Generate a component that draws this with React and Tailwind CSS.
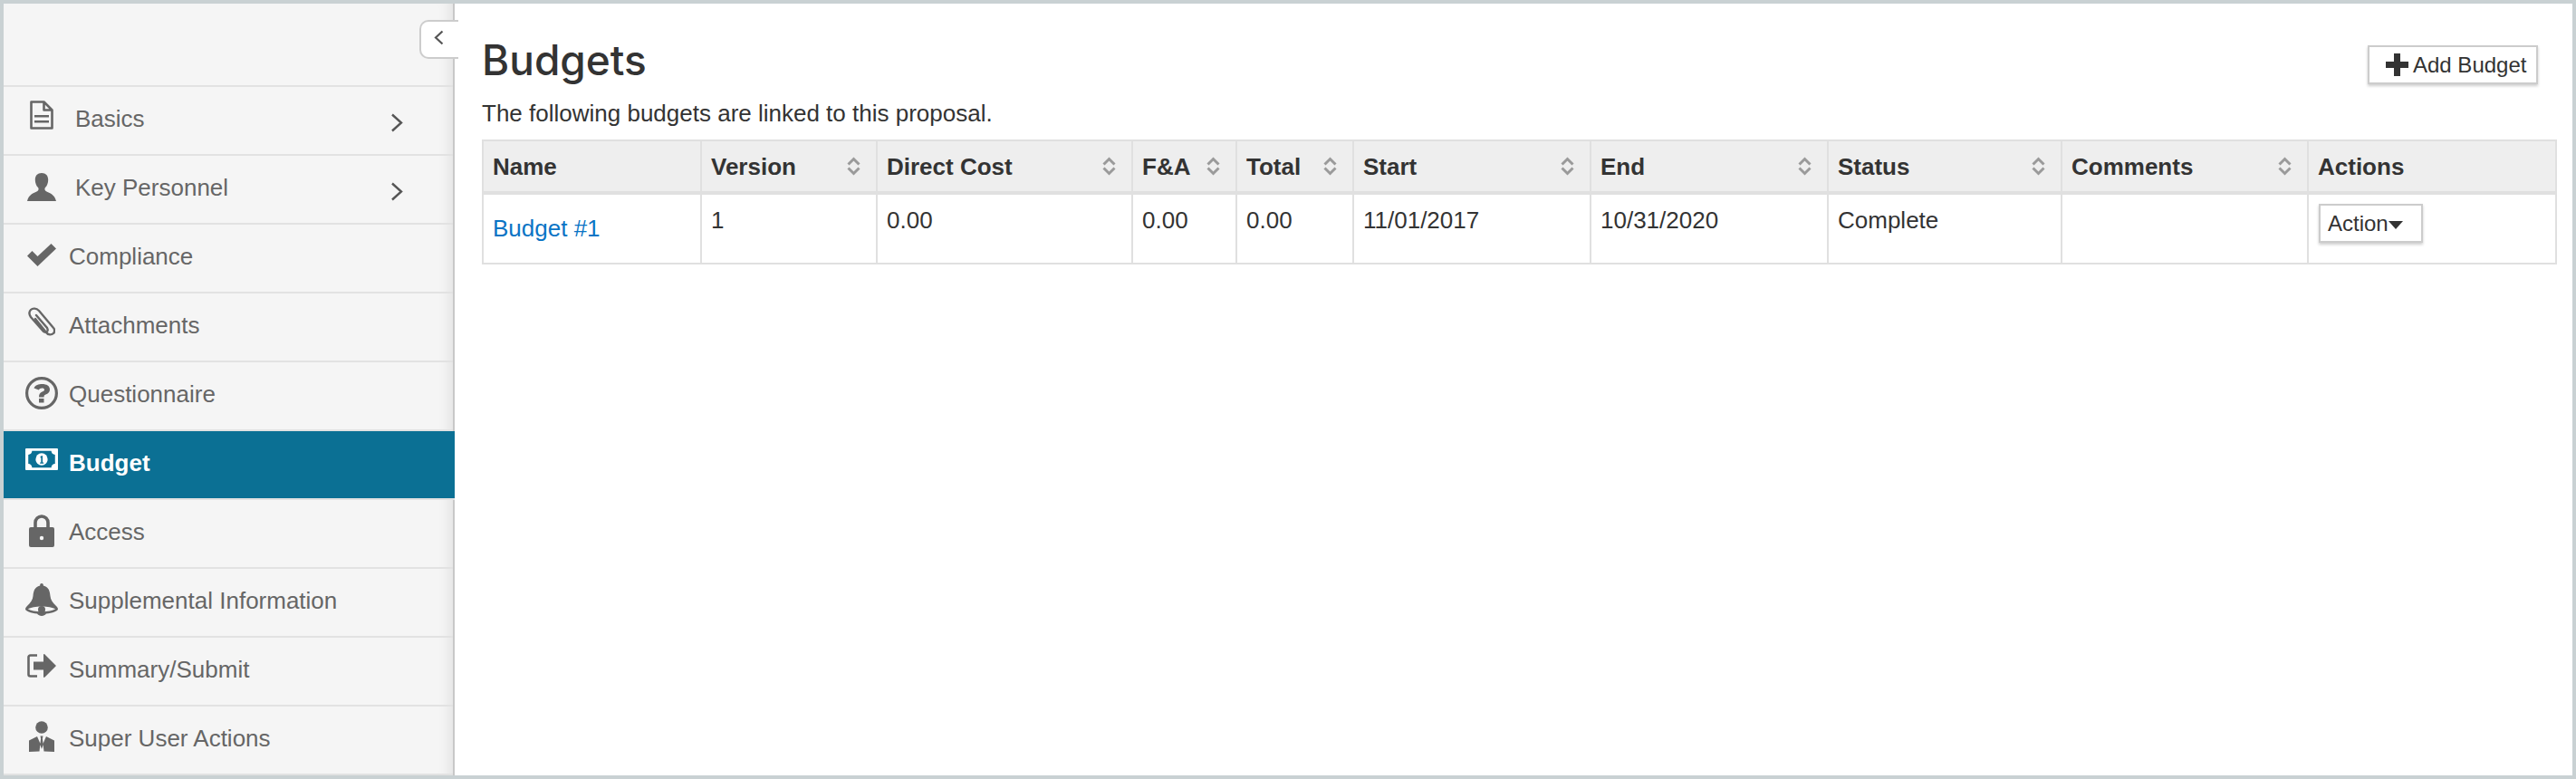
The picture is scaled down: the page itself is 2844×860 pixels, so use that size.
const FileIcon = () => (
    <svg width="28" height="32" viewBox="0 0 28 32" className="text-[#666]">
        <path d="M2.500 1.500h14l9 9v20h-23z M16.500 1.500v9h9" fill="none" stroke="currentColor" strokeWidth="2.600" strokeLinejoin="round" />
        <path d="M6 16h16v2.600H6z M6 22h16v2.600H6z" fill="currentColor" />
    </svg>
);

const UserIcon = () => (
    <svg width="32" height="31" viewBox="0 0 32 31" fill="currentColor">
        <path d="M16 0c-4.600 0-7.200 3-7.200 7.400 0 3.400 1.200 6.600 3.200 8.600 1 1 .8 3-.6 4C8 21.800 1.600 23.500 0 31h32c-1.600-7.500-8-9.200-11.400-11-1.400-1-1.600-3-.6-4 2-2 3.200-5.200 3.200-8.600C23.200 3 20.600 0 16 0z" />
    </svg>
);

const CheckIcon = () => (
    <svg width="32" height="25" viewBox="0 0 32 25" fill="currentColor">
        <path d="M0 13.500l5.500-5.500 6 6L26.500 0 32 5.500 11.500 25z" />
    </svg>
);

const ClipIcon = () => (
    <svg width="30" height="32" viewBox="0 0 30 32" fill="none" stroke="currentColor" strokeWidth="2.400" strokeLinecap="round">
        <path d="M8 13 L20 28 C22 31 26 31 28 29 C30 27 29 24 28 23 L12 4 C9 1 5 1 3 3 C1 5 1 8 3 11 L17 27 C18 28 20 28 21 27 C22 26 22 25 21 23 L9 9" />
    </svg>
);

const QuestionIcon = () => (
    <svg width="36" height="36" viewBox="0 0 36 36">
        <circle cx="18" cy="18" r="16.400" fill="none" stroke="currentColor" strokeWidth="3.200" />
        <path d="M9.500 12.500C11 9 14.500 8 18.500 8c5 0 8.500 2 8.500 6 0 3-2 4.500-4.500 5.500-1.500.7-2 1.300-2 3h-5.500c0-3.500 1-4.800 3.500-6 1.800-.8 2.500-1.300 2.500-2.300 0-1-1.200-1.700-2.500-1.700-2 0-3 .7-3.700 2z" fill="currentColor" />
        <rect x="15" y="24" width="5.500" height="4.500" fill="currentColor" />
    </svg>
);

const BillIcon = () => (
    <svg width="39" height="26" viewBox="0 0 39 26">
        <path fillRule="evenodd" clipRule="evenodd" fill="currentColor" d="M0 1A1 1 0 0 1 1 0h37a1 1 0 0 1 1 1v24a1 1 0 0 1-1 1H1a1 1 0 0 1-1-1zM8 3c0 2.500-2 4.500-4.500 4.500v11C6 18.500 8 20.500 8 23h23c0-2.500 2-4.500 4.500-4.500v-11C33 7.500 31 5.500 31 3z" />
        <circle cx="19.500" cy="13" r="7.200" fill="currentColor" />
        <path d="M18 9.500l2.600-.8v8.100h1.300v1.400h-4.400v-1.400h1.300v-5.700l-.8.200z" fill="#0b7094" />
    </svg>
);

const LockIcon = () => (
    <svg width="28" height="36" viewBox="0 0 28 36">
        <path d="M7 16V9a7 7 0 0 1 14 0v7" fill="none" stroke="currentColor" strokeWidth="3.600" />
        <rect x="0" y="14" width="28" height="22" rx="2" fill="currentColor" />
        <circle cx="14" cy="26" r="2.200" fill="#f5f5f5" />
    </svg>
);

const BellIcon = () => (
    <svg width="36" height="36" viewBox="0 0 36 36">
        <path d="M18 0c1 0 1.800.8 1.800 1.800v.8C26 4 27 9 27.500 14c.4 4 2.500 7.500 7 11.500 1 1 1.500 2 1.500 3 0 2-6 4.500-13 5-1 1.500-3 2.500-5 2.500s-4-1-5-2.500c-7-.5-13-3-13-5 0-1 .5-2 1.500-3 4.500-4 6.600-7.500 7-11.500C9 9 10 4 16.200 2.600v-.8C16.200.800 17 0 18 0z" fill="currentColor" />
        <path d="M2.800 28.300c3-1.600 9-2.800 15.200-2.800s12.200 1.200 15.200 2.800c-2.500 1.700-9 3-15.200 3s-12.700-1.300-15.200-3z" fill="#f5f5f5" />
        <circle cx="18" cy="29" r="4" fill="currentColor" />
    </svg>
);

const LogoutIcon = () => (
    <svg width="32" height="26" viewBox="0 0 32 26">
        <path d="M11 1.500H3.500a2 2 0 0 0-2 2v19a2 2 0 0 0 2 2H11" fill="none" stroke="currentColor" strokeWidth="2.600" />
        <path d="M7 8.500h11V1c0-1 .8-1.200 1.500-.6L32 13 19.500 25.600c-.7.600-1.500.4-1.500-.6v-7.500H7z" fill="currentColor" />
    </svg>
);

const SuitIcon = () => (
    <svg width="28" height="34" viewBox="0 0 28 34" fill="currentColor">
        <circle cx="14" cy="7" r="6.800" />
        <path d="M0 34V21.500l9-4.500 3.500 8-1 8.500h-.5zM28 34V21.500l-9-4.500-3.500 8 1 8.500h.5zM12.500 16.500h3l-.6 3 .8 6.500-1.700 5-1.700-5 .8-6.500z" />
    </svg>
);

const menuItems = [
    { label: 'Basics', icon: FileIcon, iconClass: '-mt-[4px]', expandable: true },
    { label: 'Key Personnel', icon: UserIcon, iconClass: '-mt-[1px]', expandable: true },
    { label: 'Compliance', icon: CheckIcon, iconClass: '-mt-[2px]' },
    { label: 'Attachments', icon: ClipIcon, iconClass: '-mt-[4px]' },
    { label: 'Questionnaire', icon: QuestionIcon, iconClass: '-mt-[1px]' },
    { label: 'Budget', icon: BillIcon, iconClass: '-mt-[4px]', active: true },
    { label: 'Access', icon: LockIcon, iconClass: '-mt-[1px]' },
    { label: 'Supplemental Information', icon: BellIcon, iconClass: '-mt-[1px]' },
    { label: 'Summary/Submit', icon: LogoutIcon, iconClass: '-mt-[4px]' },
    { label: 'Super User Actions', icon: SuitIcon, iconClass: '-mt-[2px]' },
];

const columns = [
    { label: 'Name', width: 241 },
    { label: 'Version', width: 194, sortable: true },
    { label: 'Direct Cost', width: 282, sortable: true },
    { label: 'F&A', width: 115, sortable: true },
    { label: 'Total', width: 129, sortable: true },
    { label: 'Start', width: 262, sortable: true },
    { label: 'End', width: 262, sortable: true },
    { label: 'Status', width: 258, sortable: true },
    { label: 'Comments', width: 272, sortable: true },
    { label: 'Actions', width: 274 },
];

const SortIcon = () => (
    <svg width="15" height="21" viewBox="0 0 15 21" fill="none" stroke="#9a9a9a" strokeWidth="3" className="shrink-0">
        <path d="M1.500 8.500L7.500 2.500 13.500 8.500 M1.500 12.500L7.500 18.500 13.500 12.500" />
    </svg>
);

const cellClass = 'border-2 border-[#e0e0e0] px-[10px] align-top text-[26px] leading-[32px] text-[#333] pt-[12px]';

export default function App() {
    return (
        <div className="flex h-[860px] w-[2844px] border-4 border-[#c9d1d3] bg-white font-['Liberation_Sans',Arial,sans-serif]">
            {/* Sidebar */}
            <aside className="relative w-[498px] shrink-0 border-r-2 border-[#c8c8c8] bg-[#f5f5f5] shadow-[inset_-14px_0_14px_-10px_rgba(0,0,0,0.08)]">
                <button className="absolute left-[459px] top-[18px] z-10 flex h-[43px] w-[43px] items-start justify-start rounded-l-[10px] border-2 border-r-0 border-[#cccccc] bg-white pl-[14px] pt-[9px] text-[#555]">
                    <svg width="11" height="17" viewBox="0 0 11 17" fill="none" stroke="currentColor" strokeWidth="2.200">
                        <path d="M9.500 1.500L2 8.500l7.500 7" />
                    </svg>
                </button>
                <div className="h-[92px] border-b-2 border-[#e2e2e2]" />
                {menuItems.map((item) => {
                    const Icon = item.icon;
                    return (
                        <div
                            key={item.label}
                            className={`flex h-[76px] items-start border-b-2 pl-[24px] pt-[19px] text-[26px] leading-[32px] ${item.active ? '-mr-[2px] border-[#e2e2e2] bg-[#0b7094] font-bold text-white' : 'border-[#e2e2e2] text-[#666]'}`}
                        >
                            <span className={`flex h-[32px] w-[36px] shrink-0 items-center justify-center ${item.iconClass || ''}`}>
                                <Icon />
                            </span>
                            <span className={item.expandable ? 'ml-[19px]' : 'ml-[12px]'}>{item.label}</span>
                            {item.expandable && (
                                <svg width="14" height="21" viewBox="0 0 14 21" fill="none" stroke="#555" strokeWidth="2.400" className="ml-auto mr-[55px] mt-[10px] shrink-0">
                                    <path d="M2 1.500l10 9-10 9" />
                                </svg>
                            )}
                        </div>
                    );
                })}
            </aside>

            {/* Main content */}
            <main className="min-w-0 flex-1 pl-[30px] pr-[18px] pt-[38px]">
                <div className="flex items-start justify-between">
                    <div>
                        <h1 className="font-['Inter',sans-serif] text-[46px] font-medium leading-[48px] text-[#333]">Budgets</h1>
                        <p className="mt-[19px] text-[26px] leading-[32px] text-[#333]">The following budgets are linked to this proposal.</p>
                    </div>
                    <button className="mr-[20px] mt-[8px] flex h-[43px] w-[188px] items-center border-2 border-[#cccccc] bg-white pl-[18px] text-[24px] text-[#333] shadow-[0_2px_3px_rgba(0,0,0,0.2)]">
                        <svg width="25" height="25" viewBox="0 0 25 25" fill="currentColor" className="mr-[5px] shrink-0">
                            <path d="M9 0h7v9h9v7h-9v9H9v-9H0V9h9z" />
                        </svg>
                        Add Budget
                    </button>
                </div>

                <table className="mt-[13px] w-[2289px] table-fixed border-collapse">
                    <colgroup>
                        {columns.map((col) => (
                            <col key={col.label} style={{ width: col.width }} />
                        ))}
                    </colgroup>
                    <thead>
                        <tr className="h-[58px] bg-[#eeeeee]">
                            {columns.map((col) => (
                                <th key={col.label} className="border-2 border-b-4 border-[#e0e0e0] px-[10px] text-left text-[26px] font-bold leading-[32px] text-[#333]">
                                    <div className="flex items-center justify-between pr-[7px]">
                                        <span>{col.label}</span>
                                        {col.sortable && <SortIcon />}
                                    </div>
                                </th>
                            ))}
                        </tr>
                    </thead>
                    <tbody>
                        <tr className="h-[78px]">
                            <td className={`${cellClass} !pt-[21px]`}>
                                <a href="#" className="text-[#0a74c5]">Budget #1</a>
                            </td>
                            <td className={cellClass}>1</td>
                            <td className={cellClass}>0.00</td>
                            <td className={cellClass}>0.00</td>
                            <td className={cellClass}>0.00</td>
                            <td className={cellClass}>11/01/2017</td>
                            <td className={cellClass}>10/31/2020</td>
                            <td className={cellClass}>Complete</td>
                            <td className={cellClass} />
                            <td className={`${cellClass} !pt-[10px]`}>
                                <button className="ml-[1px] flex h-[43px] w-[115px] items-center border-2 border-[#cccccc] bg-white pl-[8px] text-[24px] text-[#333] shadow-[0_2px_3px_rgba(0,0,0,0.2)]">
                                    Action
                                    <svg width="16" height="9" viewBox="0 0 16 9" fill="currentColor" className="mt-[3px] shrink-0">
                                        <path d="M0 0h16L8 9z" />
                                    </svg>
                                </button>
                            </td>
                        </tr>
                    </tbody>
                </table>
            </main>
        </div>
    );
}
